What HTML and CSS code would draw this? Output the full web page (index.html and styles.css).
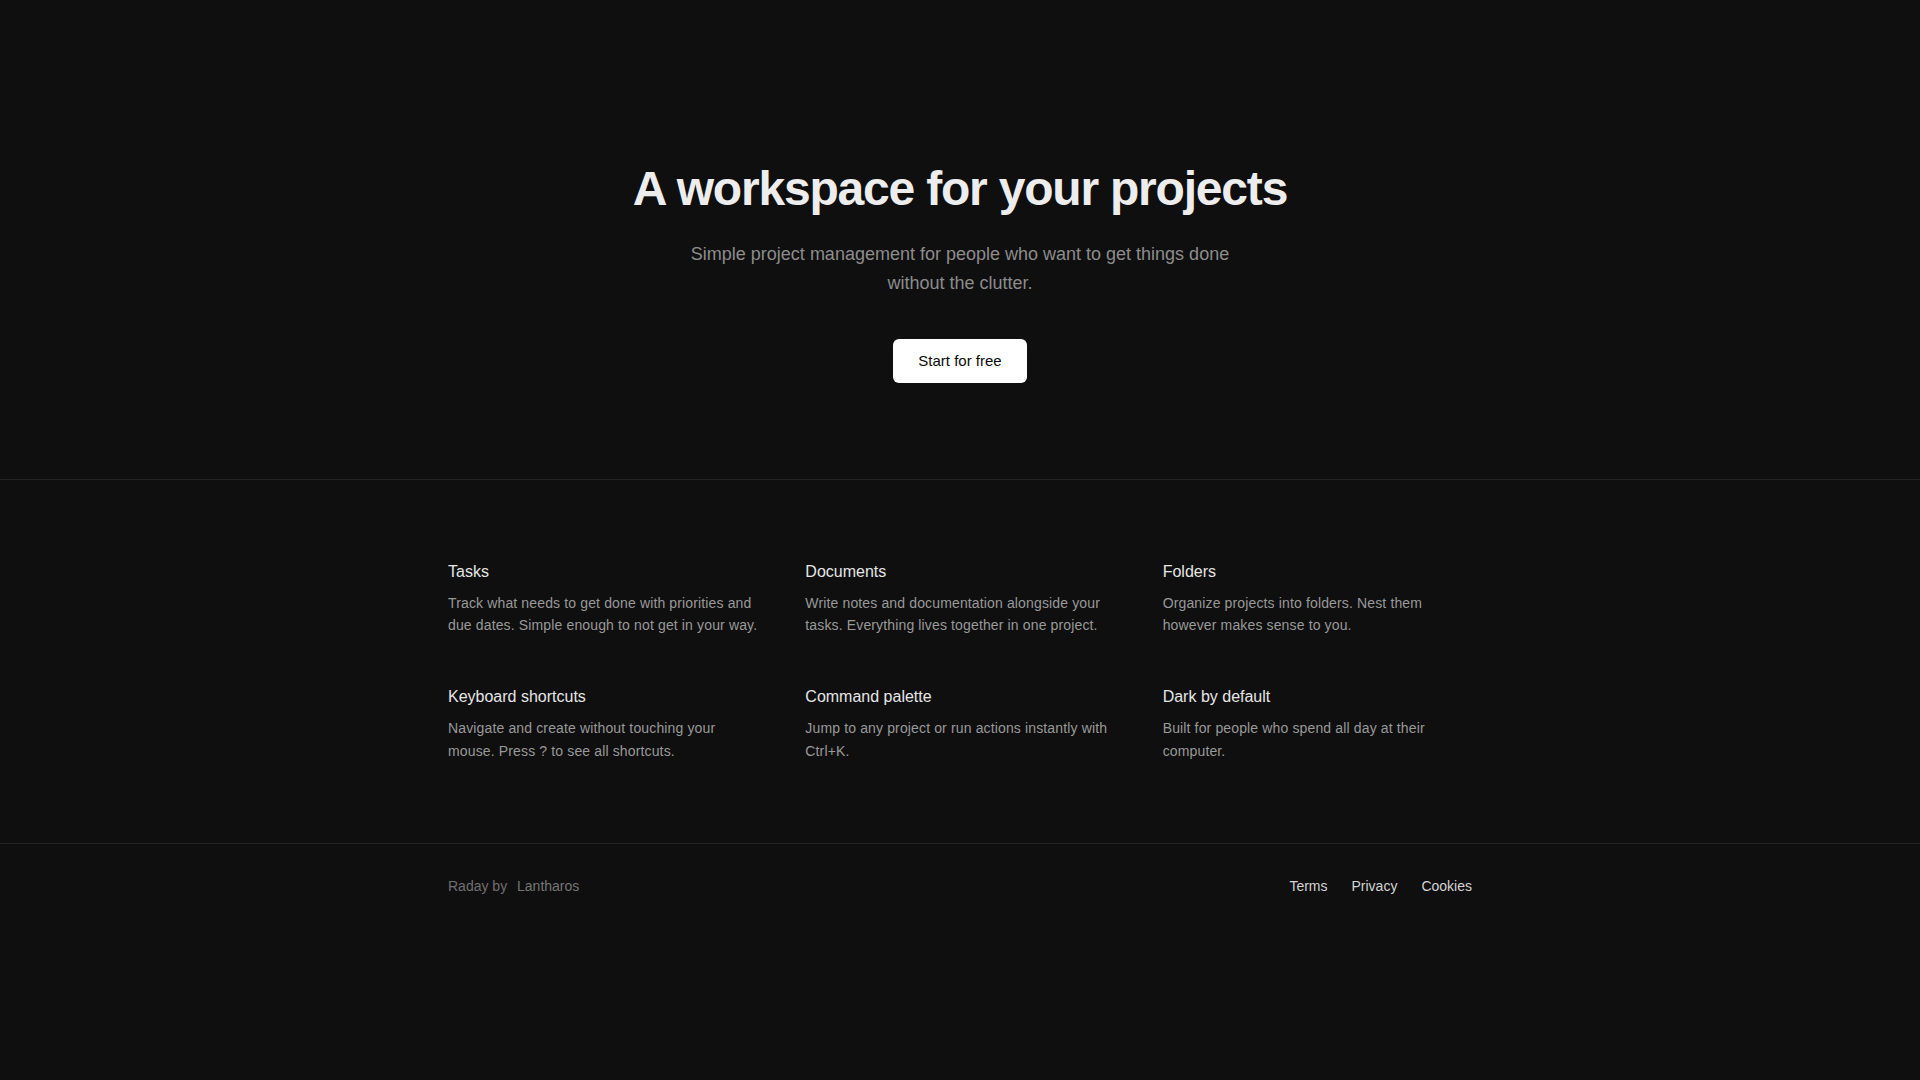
FILE: index.html
```html
<!DOCTYPE html>
<html lang="en">
<head>
<meta charset="utf-8">
<title>Raday</title>
<link rel="stylesheet" href="styles.css">
</head>
<body>
<section class="hero">
  <h1 class="hero-title">A workspace for your projects</h1>
  <p class="hero-sub">Simple project management for people who want to get things done without the clutter.</p>
  <a class="btn" href="#">Start for free</a>
</section>
<section class="features">
  <div class="grid">
    <div class="feature">
      <h3 class="feature-title">Tasks</h3>
      <p class="feature-desc">Track what needs to get done with priorities and due dates. Simple enough to not get in your way.</p>
    </div>
    <div class="feature">
      <h3 class="feature-title">Documents</h3>
      <p class="feature-desc">Write notes and documentation alongside your tasks. Everything lives together in one project.</p>
    </div>
    <div class="feature">
      <h3 class="feature-title">Folders</h3>
      <p class="feature-desc">Organize projects into folders. Nest them however makes sense to you.</p>
    </div>
    <div class="feature">
      <h3 class="feature-title">Keyboard shortcuts</h3>
      <p class="feature-desc">Navigate and create without touching your mouse. Press ? to see all shortcuts.</p>
    </div>
    <div class="feature">
      <h3 class="feature-title">Command palette</h3>
      <p class="feature-desc">Jump to any project or run actions instantly with Ctrl+K.</p>
    </div>
    <div class="feature">
      <h3 class="feature-title">Dark by default</h3>
      <p class="feature-desc">Built for people who spend all day at their computer.</p>
    </div>
  </div>
</section>
<footer class="footer">
  <div class="footer-inner">
    <p class="credit">Raday by <a class="credit-link" href="#">Lantharos</a></p>
    <nav class="footer-links">
      <a href="#">Terms</a>
      <a href="#">Privacy</a>
      <a href="#">Cookies</a>
    </nav>
  </div>
</footer>
</body>
</html>
```
FILE: styles.css
```css
* { box-sizing: border-box; }
html, body {
  margin: 0;
  padding: 0;
  background: #0f0f0f;
  color: #ededed;
  font-family: "Liberation Sans", Arial, sans-serif;
}
a { text-decoration: none; color: inherit; }

.hero {
  display: flex;
  flex-direction: column;
  align-items: center;
  text-align: center;
  padding: 165px 24px 96px;
  border-bottom: 1px solid #242424;
}
.hero-title {
  margin: 0;
  font-size: 48px;
  line-height: 1;
  font-weight: 700;
  letter-spacing: -0.025em;
  color: #ededed;
}
.hero-sub {
  margin: 27px 0 0;
  max-width: 576px;
  font-size: 18px;
  line-height: 1.625;
  color: #8c8c8c;
}
.btn {
  margin-top: 40px;
  display: inline-block;
  background: #ffffff;
  color: #0a0a0a;
  font-size: 15px;
  line-height: 20px;
  padding: 12px 25px;
  border-radius: 6px;
}

.features {
  padding: 80px 24px;
}
.grid {
  max-width: 1024px;
  margin: 0 auto;
  display: grid;
  grid-template-columns: repeat(3, 1fr);
  gap: 48px;
}
.feature-title {
  margin: 0 0 8px;
  font-size: 16px;
  line-height: 24px;
  font-weight: 400;
  color: #e6e6e6;
}
.feature-desc {
  margin: 0;
  font-size: 14px;
  line-height: 1.625;
  letter-spacing: 0.01em;
  color: #999999;
}

.footer {
  border-top: 1px solid #242424;
  padding: 32px 24px;
}
.footer-inner {
  max-width: 1024px;
  margin: 0 auto;
  display: flex;
  justify-content: space-between;
  align-items: center;
  font-size: 14px;
  line-height: 20px;
}
.credit {
  margin: 0;
  color: #707070;
}
.credit-link {
  margin-left: 6px;
  color: #767676;
}
.footer-links {
  display: flex;
  gap: 24px;
}
.footer-links a {
  color: #d4d4d4;
}
```
